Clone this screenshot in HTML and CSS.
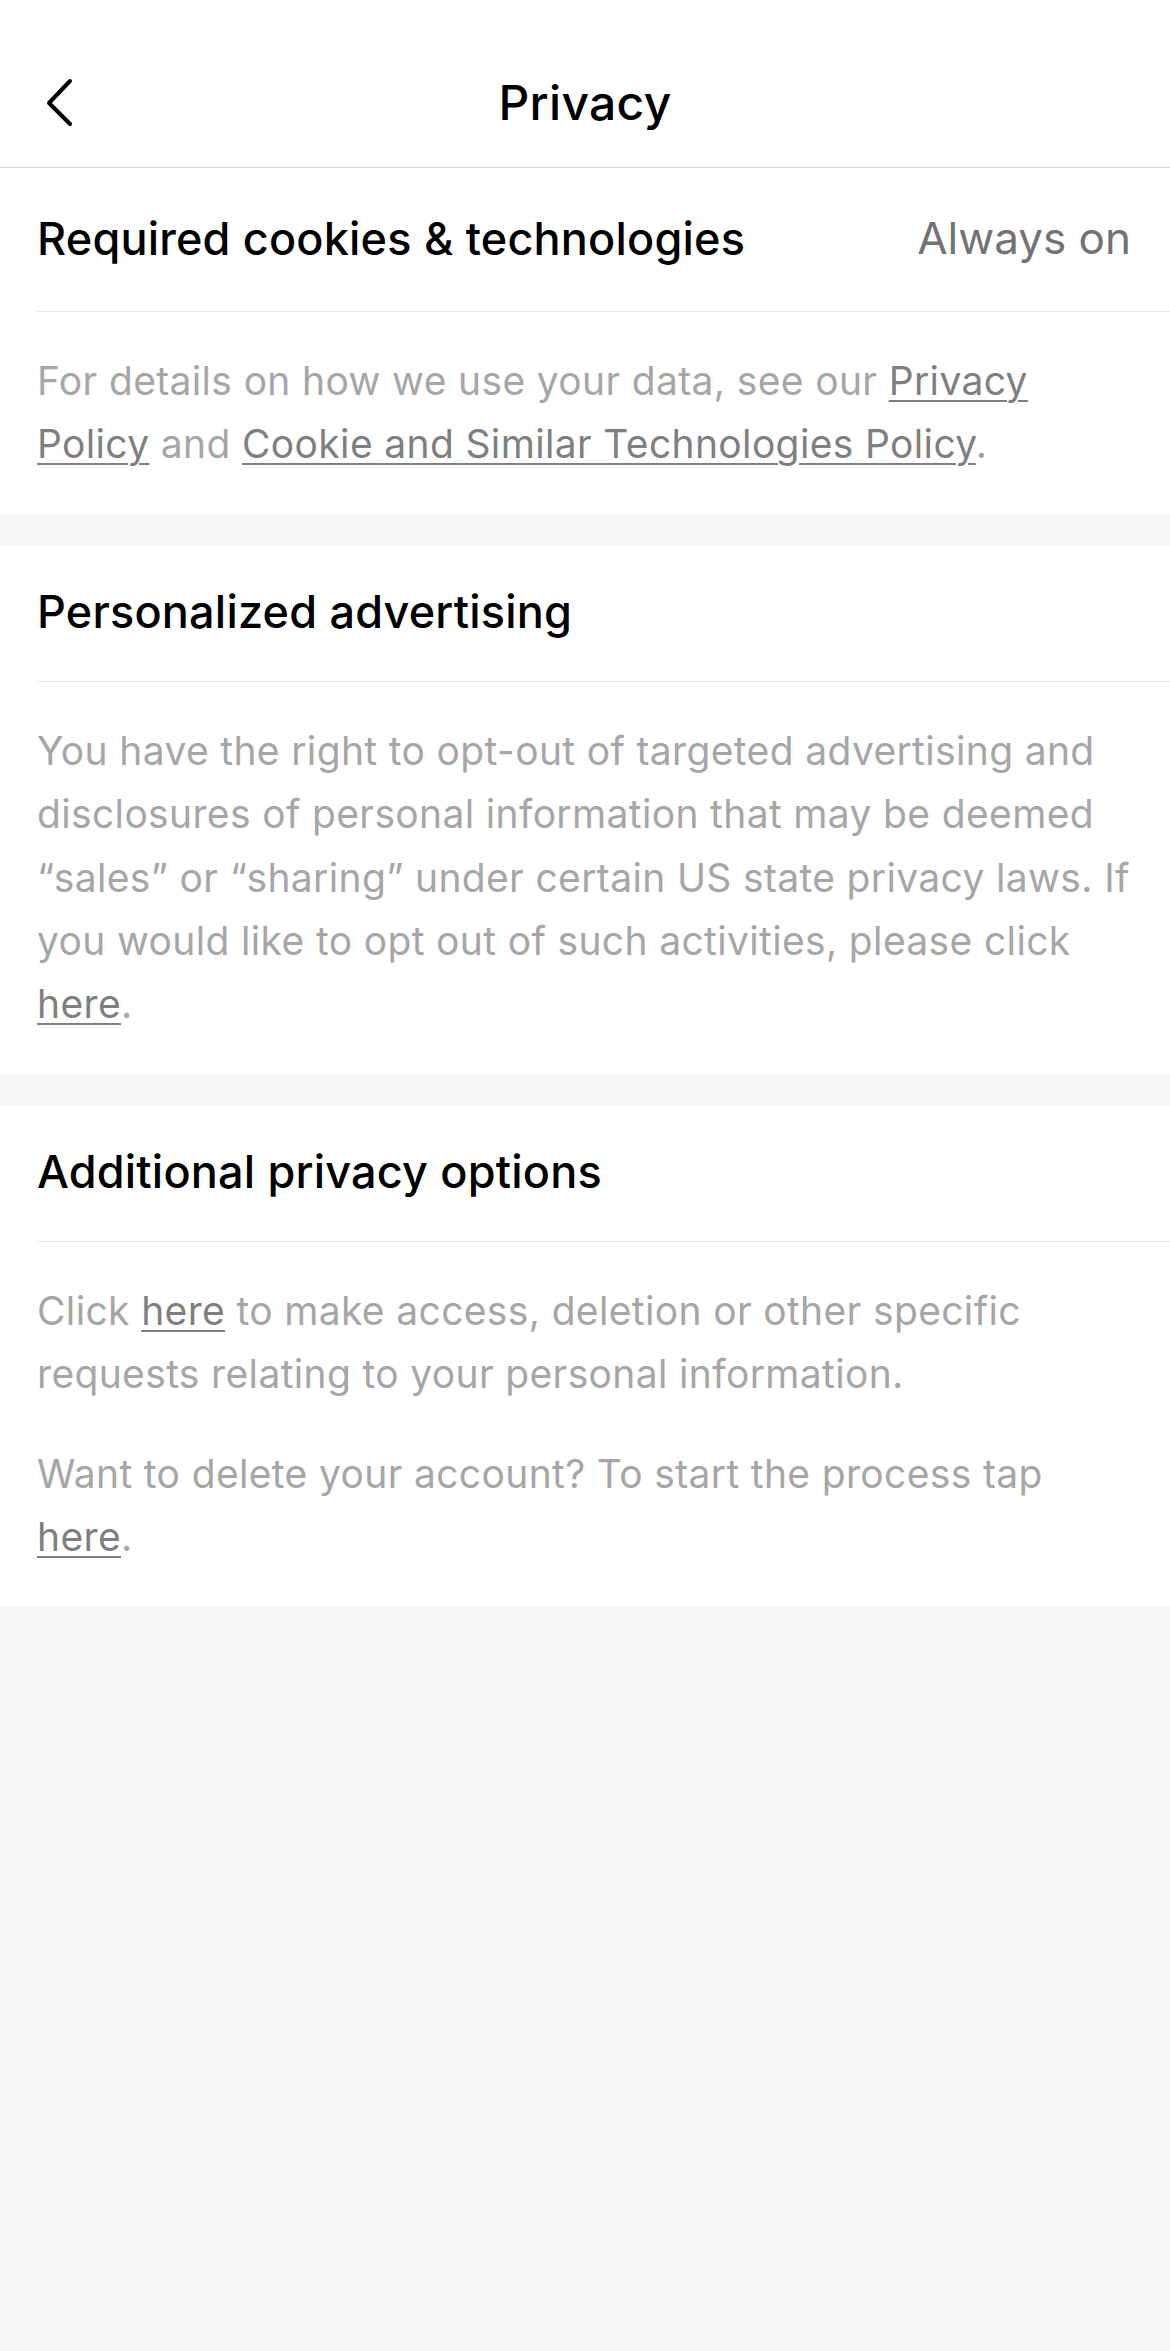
FILE: index.html
```html
<!DOCTYPE html>
<html lang="en">
<head>
    <meta charset="UTF-8">
    <meta name="viewport" content="width=device-width, initial-scale=1.0">
    <title>Privacy</title>
    <link rel="stylesheet" href="styles.css">
</head>
<body>
    <div class="topbar">
        <div class="back">
            <svg width="30" height="50" viewBox="0 0 30 50">
                <path d="M26 3 L5 25 L26 46" fill="none" stroke="#000" stroke-width="4" stroke-linecap="round" stroke-linejoin="round"/>
            </svg>
        </div>
        <h1>Privacy</h1>
        <div></div>
    </div>

    <div class="section">
        <div class="row row-value">
            <h2>Required cookies &amp; technologies</h2>
            <span class="value">Always on</span>
        </div>
        <div class="body">
            <p>For details on how we use your data, see our <a href="#">Privacy Policy</a> and <a href="#">Cookie and Similar Technologies Policy</a>.</p>
        </div>
    </div>

    <div class="section">
        <div class="row">
            <h2>Personalized advertising</h2>
        </div>
        <div class="body">
            <p>You have the right to opt-out of targeted advertising and disclosures of personal information that may be deemed “sales” or “sharing” under certain US state privacy laws. If you would like to opt out of such activities, please click <a href="#">here</a>.</p>
        </div>
    </div>

    <div class="section">
        <div class="row">
            <h2>Additional privacy options</h2>
        </div>
        <div class="body">
            <p>Click <a href="#">here</a> to make access, deletion or other specific requests relating to your personal information.</p>
            <p>Want to delete your account? To start the process tap <a href="#">here</a>.</p>
        </div>
    </div>
</body>
</html>
```

FILE: styles.css
```css
body {
    margin: 0;
    min-height: 100vh;
    background-color: #f6f6f6;
    color: #000000;
    font-family: Inter, 'Noto Sans', sans-serif;
}
.topbar {
    display: grid;
    grid-template-columns: 1fr auto 1fr;
    align-items: center;
    height: 129px;
    padding-top: 38px;
    background-color: #ffffff;
    border-bottom: 1px solid #d7d7d7;
}
.back {
    display: flex;
    align-items: center;
    padding-left: 44px;
}
.back svg {
    display: block;
}
h1 {
    margin: 0;
    font-size: 48px;
    font-weight: 500;
    letter-spacing: 0.3px;
}
.section {
    background-color: #ffffff;
}
.section + .section {
    margin-top: 30px;
}
.row {
    box-sizing: border-box;
    display: flex;
    align-items: center;
    justify-content: space-between;
    height: 136px;
    padding: 0 39px 3px 37px;
}
.row-value {
    height: 143px;
}
h2 {
    margin: 0;
    font-size: 45px;
    font-weight: 500;
    letter-spacing: 0.2px;
}
.value {
    font-size: 44px;
    color: #737373;
}
.body {
    margin-left: 37px;
    padding: 37px 39px 39px 0;
    border-top: 1px solid #e8e8e8;
}
p {
    margin: 0;
    font-size: 39px;
    line-height: 63.4px;
    letter-spacing: 0.35px;
    color: #a6a6a6;
}
p + p {
    margin-top: 36px;
}
a {
    color: #7f7f7f;
    text-decoration: underline;
    text-decoration-thickness: 2px;
    text-underline-offset: 5px;
}
```
